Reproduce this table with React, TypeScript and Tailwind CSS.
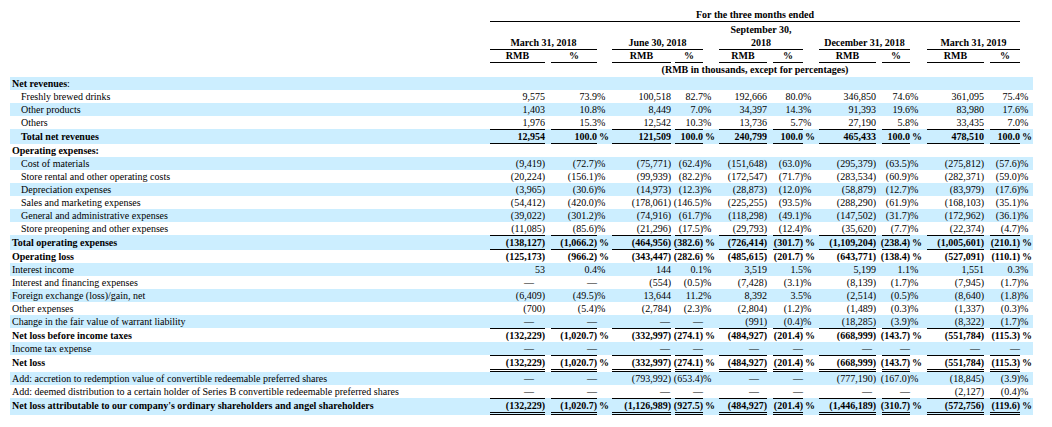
import React from 'react';

type Cell = [string, string];
type Line = {
  label: string;
  bold?: boolean;
  indent?: boolean;
  colon?: boolean;
  border?: 'top' | 'both' | 'double';
  cells?: Cell[];
};

const D: Cell = ['—', '—'];

const rows: Line[] = [
  { label: 'Net revenues', bold: true, colon: true },
  { label: 'Freshly brewed drinks', indent: true, cells: [['9,575', '73.9'], ['100,518', '82.7'], ['192,666', '80.0'], ['346,850', '74.6'], ['361,095', '75.4']] },
  { label: 'Other products', indent: true, cells: [['1,403', '10.8'], ['8,449', '7.0'], ['34,397', '14.3'], ['91,393', '19.6'], ['83,980', '17.6']] },
  { label: 'Others', indent: true, cells: [['1,976', '15.3'], ['12,542', '10.3'], ['13,736', '5.7'], ['27,190', '5.8'], ['33,435', '7.0']] },
  { label: 'Total net revenues', bold: true, indent: true, border: 'both', cells: [['12,954', '100.0'], ['121,509', '100.0'], ['240,799', '100.0'], ['465,433', '100.0'], ['478,510', '100.0']] },
  { label: 'Operating expenses:', bold: true },
  { label: 'Cost of materials', indent: true, cells: [['(9,419)', '(72.7)'], ['(75,771)', '(62.4)'], ['(151,648)', '(63.0)'], ['(295,379)', '(63.5)'], ['(275,812)', '(57.6)']] },
  { label: 'Store rental and other operating costs', indent: true, cells: [['(20,224)', '(156.1)'], ['(99,939)', '(82.2)'], ['(172,547)', '(71.7)'], ['(283,534)', '(60.9)'], ['(282,371)', '(59.0)']] },
  { label: 'Depreciation expenses', indent: true, cells: [['(3,965)', '(30.6)'], ['(14,973)', '(12.3)'], ['(28,873)', '(12.0)'], ['(58,879)', '(12.7)'], ['(83,979)', '(17.6)']] },
  { label: 'Sales and marketing expenses', indent: true, cells: [['(54,412)', '(420.0)'], ['(178,061)', '(146.5)'], ['(225,255)', '(93.5)'], ['(288,290)', '(61.9)'], ['(168,103)', '(35.1)']] },
  { label: 'General and administrative expenses', indent: true, cells: [['(39,022)', '(301.2)'], ['(74,916)', '(61.7)'], ['(118,298)', '(49.1)'], ['(147,502)', '(31.7)'], ['(172,962)', '(36.1)']] },
  { label: 'Store preopening and other expenses', indent: true, cells: [['(11,085)', '(85.6)'], ['(21,296)', '(17.5)'], ['(29,793)', '(12.4)'], ['(35,620)', '(7.7)'], ['(22,374)', '(4.7)']] },
  { label: 'Total operating expenses', bold: true, border: 'both', cells: [['(138,127)', '(1,066.2)'], ['(464,956)', '(382.6)'], ['(726,414)', '(301.7)'], ['(1,109,204)', '(238.4)'], ['(1,005,601)', '(210.1)']] },
  { label: 'Operating loss', bold: true, cells: [['(125,173)', '(966.2)'], ['(343,447)', '(282.6)'], ['(485,615)', '(201.7)'], ['(643,771)', '(138.4)'], ['(527,091)', '(110.1)']] },
  { label: 'Interest income', cells: [['53', '0.4'], ['144', '0.1'], ['3,519', '1.5'], ['5,199', '1.1'], ['1,551', '0.3']] },
  { label: 'Interest and financing expenses', cells: [D, ['(554)', '(0.5)'], ['(7,428)', '(3.1)'], ['(8,139)', '(1.7)'], ['(7,945)', '(1.7)']] },
  { label: 'Foreign exchange (loss)/gain, net', cells: [['(6,409)', '(49.5)'], ['13,644', '11.2'], ['8,392', '3.5'], ['(2,514)', '(0.5)'], ['(8,640)', '(1.8)']] },
  { label: 'Other expenses', cells: [['(700)', '(5.4)'], ['(2,784)', '(2.3)'], ['(2,804)', '(1.2)'], ['(1,489)', '(0.3)'], ['(1,337)', '(0.3)']] },
  { label: 'Change in the fair value of warrant liability', cells: [D, D, ['(991)', '(0.4)'], ['(18,285)', '(3.9)'], ['(8,322)', '(1.7)']] },
  { label: 'Net loss before income taxes', bold: true, border: 'top', cells: [['(132,229)', '(1,020.7)'], ['(332,997)', '(274.1)'], ['(484,927)', '(201.4)'], ['(668,999)', '(143.7)'], ['(551,784)', '(115.3)']] },
  { label: 'Income tax expense', cells: [D, D, D, D, D] },
  { label: 'Net loss', bold: true, border: 'double', cells: [['(132,229)', '(1,020.7)'], ['(332,997)', '(274.1)'], ['(484,927)', '(201.4)'], ['(668,999)', '(143.7)'], ['(551,784)', '(115.3)']] },
  { label: 'Add: accretion to redemption value of convertible redeemable preferred shares', cells: [D, ['(793,992)', '(653.4)'], D, ['(777,190)', '(167.0)'], ['(18,845)', '(3.9)']] },
  { label: 'Add: deemed distribution to a certain holder of Series B convertible redeemable preferred shares', cells: [D, D, D, D, ['(2,127)', '(0.4)']] },
  { label: "Net loss attributable to our company's ordinary shareholders and angel shareholders", bold: true, border: 'double', cells: [['(132,229)', '(1,020.7)'], ['(1,126,989)', '(927.5)'], ['(484,927)', '(201.4)'], ['(1,446,189)', '(310.7)'], ['(572,756)', '(119.6)']] },
];

// column widths per period (x: 490 / 612 / 719 / 819 / 927)
const rmbW = ['w-[55px]', 'w-[59px]', 'w-[48px]', 'w-[57px]', 'w-[57px]'];
const gapA = ['w-[6px]', 'w-[4px]', 'w-[6px]', 'w-[6px]', 'w-[6px]'];
const pctW = ['w-[46px]', 'w-[28px]', 'w-[30px]', 'w-[28px]', 'w-[30px]'];
const gapB = ['w-[6px]', 'w-[7px]', 'w-[7px]', 'w-[8px]', 'w-[4px]'];
const periodW = ['w-[107px]', 'w-[91px]', 'w-[84px]', 'w-[91px]', 'w-[93px]'];
const tailW = ['w-[15px]', 'w-[16px]', 'w-[16px]', 'w-[17px]', 'w-[13px]'];
const dashPad = ['pr-[11px]', 'pr-[1px]', 'pr-[8px]', 'pr-[4px]', 'pr-[4px]'];

const lineOn = {
  none: '',
  top: 'border-t border-black',
  both: 'border-t border-b border-black',
  double: 'border-t border-b-[3px] border-double border-black',
};
const lineOff = {
  none: '',
  top: 'border-t border-transparent',
  both: 'border-t border-b border-transparent',
  double: 'border-t border-b-[3px] border-double border-transparent',
};

const headers: React.ReactNode[] = [
  'March 31, 2018',
  'June 30, 2018',
  <>
    <div>September 30,</div>
    <div>2018</div>
  </>,
  'December 31, 2018',
  'March 31, 2019',
];

function Row({ r, i }: { r: Line; i: number }) {
  const b = r.border ?? 'none';
  const on = lineOn[b];
  const off = lineOff[b];
  const weight = r.bold ? 'font-bold' : '';
  return (
    <div className={`flex leading-[13px] ${i % 2 === 0 ? 'bg-[#cceeff]' : ''}`}>
      <div className={`w-[480px] flex items-center whitespace-nowrap ${r.indent ? 'pl-[11px]' : 'pl-[2px]'} ${off}`}>
        <span className={weight}>{r.label}</span>
        {r.colon && <span>:</span>}
      </div>
      {[0, 1, 2, 3, 4].map((k) => {
        const c = r.cells?.[k];
        const rmbDash = c?.[0] === '—';
        const pctDash = c?.[1] === '—';
        return (
          <React.Fragment key={k}>
            <div className={`${rmbW[k]} flex items-center justify-end whitespace-nowrap ${weight} ${rmbDash ? dashPad[k] : ''} ${c ? on : off}`}>
              {c?.[0]}
            </div>
            <div className={`${gapA[k]} ${off}`} />
            <div className={`${pctW[k]} flex items-center justify-end whitespace-nowrap ${weight} ${c ? on : off}`}>
              {c?.[1]}
            </div>
            <div className={`w-[9px] flex items-center whitespace-nowrap ${weight} ${r.bold ? 'pl-[2px]' : ''} ${off}`}>
              {c && !pctDash ? '%' : ''}
            </div>
            <div className={`${gapB[k]} ${off}`} />
          </React.Fragment>
        );
      })}
    </div>
  );
}

export default function App() {
  return (
    <div className="w-[1052px] h-[427px] bg-white text-black text-[10px] font-['Liberation_Serif',serif] overflow-hidden">
      <div className="ml-[10px] pt-[8px]">
        {/* header */}
        <div className="flex font-bold leading-[13px]">
          <div className="w-[480px]" />
          <div className="w-[530px] text-center border-b border-black">For the three months ended</div>
        </div>
        <div className="flex font-bold leading-[13px] mt-[1px]">
          <div className="w-[480px]" />
          {headers.map((h, k) => (
            <React.Fragment key={k}>
              <div className={`${periodW[k]} h-[27px] flex flex-col justify-end items-center text-center border-b border-black`}>
                {h}
              </div>
              <div className={tailW[k]} />
            </React.Fragment>
          ))}
        </div>
        <div className="flex font-bold leading-[12px]">
          <div className="w-[480px]" />
          {[0, 1, 2, 3, 4].map((k) => (
            <React.Fragment key={k}>
              <div className={`${rmbW[k]} text-center border-b border-black`}>RMB</div>
              <div className={gapA[k]} />
              <div className={`${pctW[k]} text-center border-b border-black`}>%</div>
              <div className="w-[9px]" />
              <div className={gapB[k]} />
            </React.Fragment>
          ))}
        </div>
        <div className="flex font-bold leading-[14px]">
          <div className="w-[480px]" />
          <div className="w-[530px] text-center">(RMB in thousands, except for percentages)</div>
        </div>

        {/* body */}
        <div className="w-[1023px]">
          {rows.map((r, i) => (
            <Row key={i} r={r} i={i} />
          ))}
        </div>
      </div>
    </div>
  );
}
